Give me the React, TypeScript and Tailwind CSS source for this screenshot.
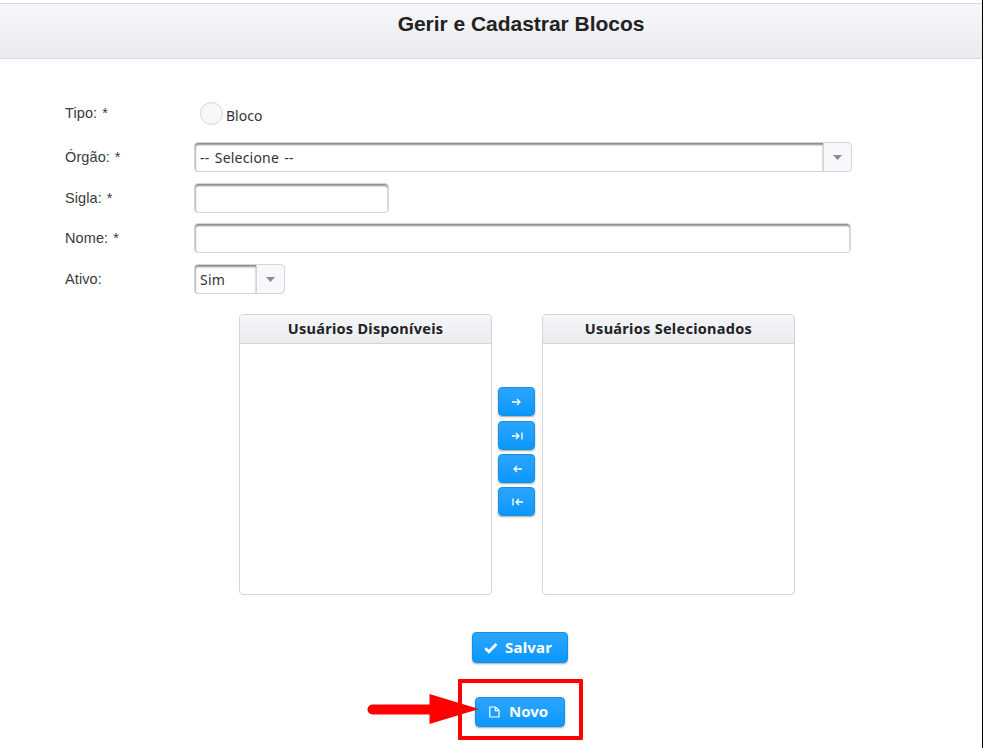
import React from "react";

const humanist = "font-['Noto_Sans','Open_Sans',sans-serif]";
const inset =
  "border border-[#d5d5d7] bg-white shadow-[inset_0_2px_2px_#8b8b8b,inset_1px_0_1px_#d0d0d0]";
const blue =
  "rounded-[4px] border border-[#1a8fe0] bg-linear-to-b from-[#2aa5ff] to-[#0698fd] text-white shadow-[0_1px_2px_rgba(0,0,0,0.35)]";

function Row({ label, height, children }: { label: string; height: string; children: React.ReactNode }) {
  return (
    <div className={`flex items-start ${height}`}>
      <label className="w-[129px] shrink-0 pt-[6px] text-[14.5px] leading-[18px] tracking-[0.1px] [word-spacing:0.8px] text-[#3a3a3e]">{label}</label>
      {children}
    </div>
  );
}

function Select({ value, width }: { value: string; width: string }) {
  return (
    <div className={`flex h-[30px] ${width} ${humanist}`}>
      <div className={`flex-1 rounded-l-[4px] border-r-0 pl-[5px] pt-px text-[14px] leading-[28px] tracking-[0.2px] [word-spacing:1.5px] text-[#333] whitespace-nowrap ${inset}`}>
        {value}
      </div>
      <div className="flex w-[29px] items-center justify-center rounded-r-[4px] border border-[#d5d5d7] bg-[#f8f8fc]">
        <svg width="9" height="5" viewBox="0 0 9 5">
          <path d="M0 0h9L4.5 5z" fill="#8b8b8d" />
        </svg>
      </div>
    </div>
  );
}

function List({ title }: { title: string }) {
  return (
    <section className="h-[281px] w-[253px] overflow-hidden rounded-[4px] border border-[#d5d5d8]">
      <h2 className={`h-[29px] border-b border-[#d5d5d8] bg-linear-to-b from-[#f5f6f8] to-[#ebecf0] text-center text-[14.5px] leading-[27px] font-bold tracking-[0.28px] text-[#222] ${humanist}`}>
        {title}
      </h2>
    </section>
  );
}

function ArrowButton({ d, margin }: { d: string; margin: string }) {
  return (
    <button className={`flex h-[29px] w-[37px] items-center justify-center ${margin} ${blue}`}>
      <svg width="12" height="10" viewBox="0 0 12 10" fill="none" stroke="currentColor" strokeWidth="1.3">
        <path d={d} />
      </svg>
    </button>
  );
}

export default function App() {
  return (
    <main className="relative h-[748px] w-[983px] overflow-hidden border-r border-black bg-white pt-[3px] font-['Liberation_Sans',Arial,sans-serif]">
      <header className="h-[56px] border-y border-[#d8d9dc] bg-linear-to-b from-[#f6f7f9] to-[#eaebef] pl-[60px] pt-[7px] text-center">
        <h1 className="text-[21px] leading-[26px] font-bold tracking-[-0.03px] text-[#222]">Gerir e Cadastrar Blocos</h1>
      </header>

      <form className="pl-[65px] pt-[39px]" onSubmit={(e) => e.preventDefault()}>
        <Row label="Tipo: *" height="h-[44px]">
          <div className="flex pl-[6px] pt-[4px]">
            <span className="h-[23px] w-[23px] rounded-full border border-[#d5d5d7] bg-[#f8f8fb]" />
            <span className={`pl-[3px] pt-[5px] text-[14px] leading-[18px] text-[#333] ${humanist}`}>Bloco</span>
          </div>
        </Row>
        <Row label="Órgão: *" height="h-[41px]">
          <Select value="-- Selecione --" width="w-[658px]" />
        </Row>
        <Row label="Sigla: *" height="h-[40px]">
          <input className={`h-[30px] w-[195px] rounded-[4px] ${inset}`} />
        </Row>
        <Row label="Nome: *" height="h-[41px]">
          <input className={`h-[30px] w-[657px] rounded-[4px] ${inset}`} />
        </Row>
        <Row label="Ativo:" height="h-[50px]">
          <Select value="Sim" width="w-[91px]" />
        </Row>
      </form>

      <div className="flex pl-[239px]">
        <List title="Usuários Disponíveis" />
        <div className="flex w-[50px] flex-col items-start pl-[6px] pt-[73px]">
          <ArrowButton d="M1 5h8M6 2l3 3-3 3" margin="mb-[5px]" />
          <ArrowButton d="M1 5h7M5 2l3 3-3 3M11 1.5v7" margin="mb-[4px]" />
          <ArrowButton d="M11 5H3M6 2L3 5l3 3" margin="mb-[4px]" />
          <ArrowButton d="M12 5H5M8 2L5 5l3 3M2 1.5v7" margin="" />
        </div>
        <List title="Usuários Selecionados" />
      </div>

      <div className="flex flex-col items-start pt-[37px]">
        <button className={`ml-[472px] flex h-[31px] w-[96px] items-center pl-[11px] ${blue}`}>
          <svg width="14" height="12" viewBox="0 0 14 12" fill="none" stroke="currentColor" strokeWidth="2.8">
            <path d="M1.3 6.2l3.6 3.5L12.5 2" />
          </svg>
          <span className={`pl-[7px] pb-px text-[15px] leading-[20px] font-bold tracking-[0.2px] ${humanist}`}>Salvar</span>
        </button>
        <button className={`mt-[34px] ml-[475px] flex h-[30px] w-[90px] items-center pl-[13px] ${blue}`}>
          <svg width="11" height="12" viewBox="0 0 11 12" fill="none" stroke="currentColor" strokeWidth="1.2">
            <path d="M.8 1h5.8L10 4.2V11H.8zM6.3 1v3.7H10" />
          </svg>
          <span className={`pl-[9px] pb-[2px] text-[15px] leading-[20px] font-bold ${humanist}`}>Novo</span>
        </button>
      </div>

      {/* Callout drawn over the "Novo" button */}
      <div className="absolute top-[679px] left-[458px] h-[61px] w-[125px] rounded-[1px] border-4 border-[#ff0000]" />
      <svg className="absolute top-[690px] left-[364px]" width="120" height="40" viewBox="0 0 120 40">
        <path d="M8.5 19.5H70" stroke="#ff0000" strokeWidth="10" strokeLinecap="round" />
        <path d="M65.5 4L115 19 65.5 34z" fill="#ff0000" />
      </svg>
    </main>
  );
}
